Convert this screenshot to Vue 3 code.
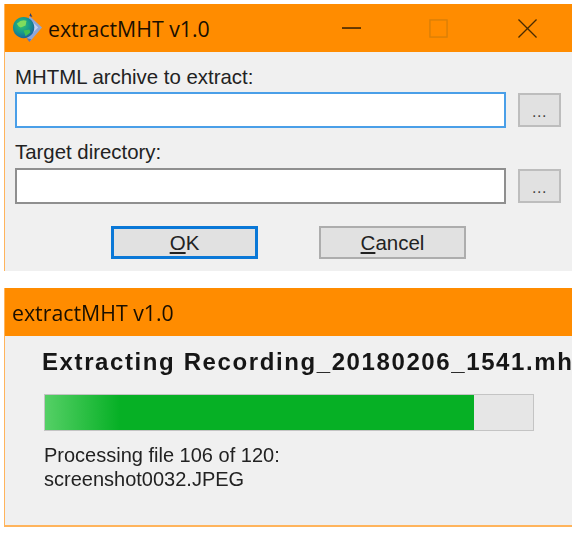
<script setup>
const done = 106
const total = 120
const currentFile = 'screenshot0032.JPEG'
const percent = 88
</script>

<template>
  <div class="page">
    <section class="dialog dialog-form">
      <header class="titlebar">
        <svg class="app-icon" viewBox="0 0 32 32" aria-hidden="true">
          <defs>
            <radialGradient id="globe" cx="0.42" cy="0.38" r="0.65">
              <stop offset="0" stop-color="#35c46a" />
              <stop offset="0.55" stop-color="#169a8c" />
              <stop offset="1" stop-color="#1c5f9c" />
            </radialGradient>
          </defs>
          <path d="M18 3 L31 15 L19 29 L14 24 Z" fill="#8fa6d8" />
          <path d="M20 8 L27 15 L20 22 Z" fill="#c4d0ee" />
          <circle cx="12" cy="15" r="11" fill="url(#globe)" />
          <path d="M5 11 q5 -5 10 -3 l-1 5 l-5 2 l-2 -1 Z" fill="#7fdc5e" />
          <path d="M12 18 l6 -1 l1 3 l-5 4 Z" fill="#3fbf55" />
          <path d="M18 3 l1 -3 l2 4 Z" fill="#2c3f70" />
          <path d="M15 26 l3 4 l2 -3 Z" fill="#5d78b8" />
        </svg>
        <span class="title title-icon">extractMHT v1.0</span>
        <div class="window-controls">
          <svg class="ctl ctl-min" viewBox="0 0 20 20" aria-hidden="true">
            <path d="M0 9.5 H20" stroke="#1d1000" stroke-width="1.4" fill="none" />
          </svg>
          <svg class="ctl" viewBox="0 0 20 20" aria-hidden="true">
            <rect x="1" y="1" width="18" height="18" stroke="#d97f08" stroke-width="1.4" fill="none" />
          </svg>
          <svg class="ctl" viewBox="0 0 20 20" aria-hidden="true">
            <path d="M0.5 0.5 L19.5 19.5 M19.5 0.5 L0.5 19.5" stroke="#4a2b00" stroke-width="1.4" fill="none" />
          </svg>
        </div>
      </header>
      <div class="form-body">
        <label class="field-label first">MHTML archive to extract:</label>
        <div class="field-row">
          <div class="text-input focused"></div>
          <button class="browse">...</button>
        </div>
        <label class="field-label second">Target directory:</label>
        <div class="field-row">
          <div class="text-input"></div>
          <button class="browse">...</button>
        </div>
        <div class="actions">
          <button class="action default"><u>O</u>K</button>
          <button class="action"><u>C</u>ancel</button>
        </div>
      </div>
    </section>

    <section class="dialog dialog-progress">
      <header class="titlebar">
        <span class="title">extractMHT v1.0</span>
      </header>
      <div class="progress-body">
        <h1 class="heading">Extracting Recording_20180206_1541.mht</h1>
        <div class="progress-track">
          <div class="progress-fill" :style="{ width: percent + '%' }"></div>
        </div>
        <p class="status">Processing file {{ done }} of {{ total }}:<br />{{ currentFile }}</p>
      </div>
    </section>
  </div>
</template>

<style>
html,
body {
  background: #ffffff;
}
</style>

<style scoped>
.page {
  width: 580px;
  height: 540px;
  box-sizing: border-box;
  padding: 4px 8px 0 4px;
  display: flex;
  flex-direction: column;
  gap: 17px;
  overflow: hidden;
  font-family: "Liberation Sans", Arial, sans-serif;
  color: #1c1c1c;
  filter: blur(0.6px);
}
.dialog {
  background: #f0f0f0;
  border-left: 1px solid #ffb45c;
  overflow: hidden;
}
.dialog-form {
  height: 267px;
}
.dialog-progress {
  height: 239px;
  border-bottom: 2px solid #ffb45c;
  box-sizing: border-box;
}
.titlebar {
  height: 48px;
  margin-left: -1px;
  background: #ff8c00;
  display: flex;
  align-items: center;
  padding-left: 8px;
}
.app-icon {
  width: 31px;
  height: 31px;
  margin-right: 5px;
  flex: none;
}
.title {
  font-family: "Open Sans", "Noto Sans", sans-serif;
  font-size: 21.3px;
  color: #1a0f00;
}
.title-icon {
  width: 170px;
}
.window-controls {
  margin-left: auto;
  display: flex;
  gap: 70px;
  padding-right: 35px;
}
.ctl {
  width: 19px;
  height: 19px;
  display: block;
}
.ctl-min {
  margin-right: -2px;
}
.form-body {
  padding: 0 11px 0 10px;
}
.field-label {
  display: block;
  font-size: 20.4px;
  line-height: 22px;
  color: #222;
}
.field-label.first {
  padding-top: 14px;
  margin-bottom: 4px;
}
.field-label.second {
  margin-top: 13px;
  margin-bottom: 5px;
}
.field-row {
  display: flex;
  align-items: center;
  gap: 12px;
}
.text-input {
  width: 491px;
  height: 36px;
  box-sizing: border-box;
  background: #fff;
  border: 2px solid #8f8f8f;
}
.text-input.focused {
  border-color: #4a9fe8;
}
.browse {
  width: 43px;
  height: 34px;
  box-sizing: border-box;
  background: #e1e1e1;
  border: 2px solid #bdbdbd;
  padding: 4px 0 0;
  font-family: "Liberation Sans", Arial, sans-serif;
  font-size: 16px;
  letter-spacing: 0.5px;
  color: #444;
}
.actions {
  display: flex;
  gap: 61px;
  margin-top: 22px;
  padding-left: 96px;
}
.action {
  width: 147px;
  height: 33px;
  box-sizing: border-box;
  background: #e1e1e1;
  border: 2px solid #adadad;
  padding: 0;
  font-family: "Liberation Sans", Arial, sans-serif;
  font-size: 20.5px;
  color: #222;
}
.action.default {
  border: 3px solid #0a78d7;
}
.progress-body {
  padding: 0 0 0 37px;
}
.heading {
  margin: 14px 0 0;
  font-size: 24px;
  line-height: 24px;
  font-weight: 700;
  letter-spacing: 1.6px;
  white-space: nowrap;
  color: #161616;
}
.progress-track {
  width: 490px;
  height: 37px;
  margin-top: 20px;
  margin-left: 2px;
  box-sizing: border-box;
  background: #e6e6e6;
  border: 1px solid #c4c4c4;
}
.progress-fill {
  height: 100%;
  background: linear-gradient(90deg, #55d066 0, #06b025 75px);
}
.status {
  margin: 12px 0 0 2px;
  font-size: 20px;
  line-height: 24px;
  color: #222;
}
</style>
